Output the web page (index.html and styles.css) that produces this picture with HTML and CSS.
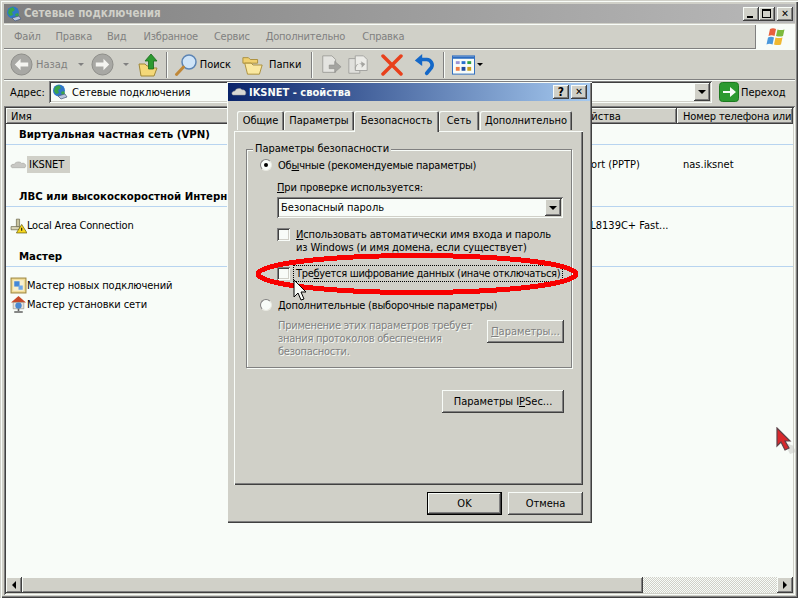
FILE: index.html
```html
<!DOCTYPE html>
<html lang="ru">
<head>
<meta charset="utf-8">
<title>Сетевые подключения</title>
<link rel="stylesheet" href="styles.css">
</head>
<body>
<div class="window">
  <header class="titlebar">
    <svg class="ico16" viewBox="0 0 16 16"><circle cx="7" cy="6.5" r="6" fill="#2f78c8"/><path d="M3 3l4-2 2 3-3 2 1 3-3 1-2-3z" fill="#3aa54a"/><path d="M9 8l3-1 1 3-3 1z" fill="#3aa54a"/><path d="M6 12l7-2 2 3-6 2z" fill="#b8c4dc" stroke="#46587a" stroke-width=".7"/></svg>
    <span class="titlebar-text">Сетевые подключения</span>
    <div class="caption-btns">
      <span class="cap-btn"><i class="cap-min"></i></span>
      <span class="cap-btn"><i class="cap-max"></i></span>
      <span class="cap-btn cap-gap cap-x">✕</span>
    </div>
  </header>

  <nav class="menubar">
    <span class="menu-item m1">Файл</span>
    <span class="menu-item m2">Правка</span>
    <span class="menu-item m3">Вид</span>
    <span class="menu-item m4">Избранное</span>
    <span class="menu-item m5">Сервис</span>
    <span class="menu-item m6">Дополнительно</span>
    <span class="menu-item">Справка</span>
    <div class="logo">
      <svg width="22" height="20" viewBox="0 0 22 20"><path d="M5 2q3-1.500 6 0l-1.500 7q-3-1.500-6 0z" fill="#e8603c"/><path d="M12.500 2.500q3 1 7 0L18 9q-3 1-7 0z" fill="#7cba3c"/><path d="M3 10.500q3-1.500 6 0L7.500 17.500q-3-1.500-6 0z" fill="#4a98dc"/><path d="M10.500 10.500q3 1 7 0L16 17.500q-3 1-7 0z" fill="#f0b830"/></svg>
    </div>
  </nav>

  <div class="toolbar">
    <svg class="nav-ico" viewBox="0 0 24 24"><circle cx="12" cy="12" r="11" fill="#a8a8a4" stroke="#8c8c88"/><path d="M11 6l-6 6 6 6v-4h8v-4h-8z" fill="#f4f4f0"/></svg>
    <span class="tool-label disabled-text back-label">Назад</span>
    <i class="tool-arrow gray-arrow back-arrow"></i>
    <svg class="nav-ico" viewBox="0 0 24 24"><circle cx="12" cy="12" r="11" fill="#a8a8a4" stroke="#8c8c88"/><path d="M13 6l6 6-6 6v-4H5v-4h8z" fill="#f4f4f0"/></svg>
    <i class="tool-arrow gray-arrow fwd-arrow"></i>
    <svg class="tool-ico up-ico" viewBox="0 0 22 24"><path d="M1 11h6l2 2 5 0-2 2h7l-3 8H3z" fill="#f4d878" stroke="#a08838"/><path d="M13 1l6 7h-3.500v8h-5V8H7z" fill="#2c9a30" stroke="#186a1c" stroke-width=".8"/></svg>
    <i class="tool-sep sep1"></i>
    <svg class="tool-ico search-ico" viewBox="0 0 24 24"><circle cx="15" cy="9" r="7" fill="#cfe4f8" stroke="#5c84b4" stroke-width="1.500"/><path d="M9.500 14L2.500 21.500" stroke="#c08838" stroke-width="3" stroke-linecap="round"/></svg>
    <span class="tool-label search-label">Поиск</span>
    <svg class="tool-ico folders-ico" viewBox="0 0 24 24"><path d="M1 4h6l2 2h8v4H1z" fill="#f0d070" stroke="#a88c38"/><path d="M3 10h7l2 2h10l-3 10H6z" fill="#fae8a0" stroke="#a88c38"/></svg>
    <span class="tool-label folders-label">Папки</span>
    <i class="tool-sep sep2"></i>
    <svg class="tool-ico move-ico" viewBox="0 0 24 24"><path d="M3 2h10l4 4v14H3z" fill="#e4e4e0" stroke="#9c9c98"/><path d="M10 12h6V8l7 6-7 6v-4h-6z" fill="#a4a4a0" stroke="#8c8c88" stroke-width=".6"/></svg>
    <svg class="tool-ico copy-ico" viewBox="0 0 24 24"><path d="M2 5h9l3 3v13H2z" fill="#e0e0dc" stroke="#a0a09c"/><path d="M9 2h9l4 4v12H9z" fill="#ececE8" stroke="#a0a09c"/><path d="M10 18a6 6 0 0 1 6-8l-1-2 5 3-4 4v-3a4 4 0 0 0-6 6z" fill="#a4a4a0"/></svg>
    <svg class="tool-ico del-ico" viewBox="0 0 22 22"><path d="M2 2l18 18M20 2L2 20" stroke="#e8401c" stroke-width="3.500" stroke-linecap="round"/></svg>
    <svg class="tool-ico undo-ico" viewBox="0 0 24 24"><path d="M7 6h8a6 6 0 0 1 5 9l-5 6" fill="none" stroke="#1468c8" stroke-width="4" stroke-linecap="round"/><path d="M10 0L2 7l8 6z" fill="#1468c8"/></svg>
    <i class="tool-sep sep3"></i>
    <svg class="views-ico" viewBox="0 0 24 20"><rect x=".5" y=".5" width="23" height="19" fill="#f8fcf8" stroke="#2c6cc0"/><rect x="1" y="1" width="22" height="2.500" fill="#2c6cc0"/><path d="M4 6h4v3H4z" fill="#9c94d4"/><path d="M10 6h4v3h-4z" fill="#2870d0"/><path d="M16 6h4v3h-4z" fill="#2ca048"/><path d="M4 12h4v4H4z" fill="#f07840"/><path d="M10 12h4v4h-4z" fill="#204ca0"/><path d="M16 12h4v4h-4z" fill="#c8a020"/></svg>
    <i class="tool-arrow views-arrow"></i>
  </div>

  <div class="addressbar">
    <span class="addr-label">Адрес:</span>
    <div class="addr-field">
      <svg class="ico16" viewBox="0 0 16 16"><circle cx="7" cy="6.500" r="6" fill="#2f78c8"/><path d="M3 3l4-2 2 3-3 2 1 3-3 1-2-3z" fill="#3aa54a"/><path d="M9 8l3-1 1 3-3 1z" fill="#3aa54a"/><path d="M6 12l7-2 2 3-6 2z" fill="#b8c4dc" stroke="#46587a" stroke-width=".7"/></svg>
      <span class="addr-text">Сетевые подключения</span>
      <span class="drop-btn"><i class="tool-arrow black-arrow"></i></span>
    </div>
    <svg class="go-ico" viewBox="0 0 20 20"><rect x=".5" y=".5" width="19" height="19" rx="3" fill="#2c9a30" stroke="#1c7a20"/><path d="M4 9h7V5l6 5-6 5v-4H4z" fill="#f8fcf8"/></svg>
    <span class="go-label">Переход</span>
  </div>

  <main class="listview">
    <div class="list-header">
      <span class="col-head col-name">Имя</span>
      <span class="col-head col-device">Имя устройства</span>
      <span class="col-head col-phone phone-head">Номер телефона или а</span>
    </div>
    <div class="list-body">
      <h2 class="group group-first">Виртуальная частная сеть (VPN)</h2>
      <div class="row row-vpn">
        <div class="col-name cell">
          <svg class="ico-row" viewBox="0 0 16 16"><path d="M2 11c-2-1-1-4 2-3 1-3 6-3 7-1 3-1 5 2 3 4z" fill="#c8c8c4" stroke="#9c9c98" stroke-width=".5"/></svg>
          <span class="selected">IKSNET</span>
        </div>
        <span class="col-device device-text">WAN Miniport (PPTP)</span>
        <span class="col-phone phone-text">nas.iksnet</span>
      </div>
      <h2 class="group">ЛВС или высокоскоростной Интернет</h2>
      <div class="row row-lan">
        <div class="col-name cell">
          <svg class="ico-row" viewBox="0 0 16 16"><path d="M1 9h8v3H1z" fill="#d8d4b8" stroke="#706c50" stroke-width=".7"/><path d="M6 2h3v7H6z" fill="#c8c4a0" stroke="#706c50" stroke-width=".7"/><path d="M11 7l5 8H6z" fill="#f8d820" stroke="#686010" stroke-width=".7"/><path d="M10.500 10h1v3h-1z" fill="#111"/></svg>
          <span class="cell-text lan-text">Local Area Connection</span>
        </div>
        <span class="col-device device-text">Realtek RTL8139C+ Fast...</span>
      </div>
      <h2 class="group group-wizard">Мастер</h2>
      <div class="row row-wiz1">
        <div class="col-name cell">
          <svg class="ico-row" viewBox="0 0 16 16"><rect x="1" y="1" width="14" height="14" fill="#f0dc98" stroke="#a08840"/><rect x="3" y="3" width="10" height="10" fill="#f8f0d0"/><path d="M4 4h5v5H4z" fill="#4488d8"/><path d="M8 8h4v4H8z" fill="#70a8e8"/></svg>
          <span class="cell-text">Мастер новых подключений</span>
        </div>
      </div>
      <div class="row row-wiz2">
        <div class="col-name cell">
          <svg class="ico-row" viewBox="0 0 16 16"><path d="M8 0L1 6h14z" fill="#c84828"/><path d="M3 6h10v6H3z" fill="#e8e4dc" stroke="#807c74" stroke-width=".5"/><circle cx="8" cy="9" r="3" fill="#4a88d0"/><path d="M8 12v2M4 15h8" stroke="#606060" stroke-width="1.500"/></svg>
          <span class="cell-text">Мастер установки сети</span>
        </div>
      </div>
    </div>
    <div class="hscroll">
      <span class="scroll-btn"><i class="arrow-left"></i></span>
      <span class="scroll-thumb"></span>
      <span class="scroll-track"></span>
      <span class="scroll-btn"><i class="arrow-right"></i></span>
    </div>
  </main>
</div>

<section class="dialog">
  <header class="dlg-title">
    <svg class="dlg-cloud" viewBox="0 0 16 12"><path d="M2 9C0 8 1 5 4 5c1-3 6-3 7-1 3-1 5 3 3 5z" fill="#d8d8d4" stroke="#a0a09c" stroke-width=".5"/></svg>
    <span class="dlg-title-text">IKSNET - свойства</span>
    <span class="cap-btn dlg-help">?</span>
    <span class="cap-btn cap-gap cap-x">✕</span>
  </header>
  <div class="tabs">
    <span class="tab t-general">Общие</span>
    <span class="tab t-params">Параметры</span>
    <span class="tab tab-active t-sec">Безопасность</span>
    <span class="tab t-net">Сеть</span>
    <span class="tab t-more">Дополнительно</span>
  </div>
  <div class="panel">
    <div class="groupbox">
      <span class="legend">Параметры безопасности</span>
      <label class="opt opt-top"><i class="radio radio-on"></i><span>Об<u>ы</u>чные (рекомендуемые параметры)</span></label>
      <div class="sub-label"><u>П</u>ри проверке используется:</div>
      <div class="combo"><span class="combo-text">Безопасный пароль</span><span class="drop-btn combo-btn"><i class="tool-arrow black-arrow"></i></span></div>
      <label class="check-row check-auto"><i class="checkbox"></i><span><u>И</u>спользовать автоматически имя входа и пароль<br>из Windows (и имя домена, если существует)</span></label>
      <label class="check-row check-enc"><i class="checkbox"></i><span class="focus-text">Тре<u>б</u>уется шифрование данных (иначе отключаться)</span></label>
      <label class="opt opt-adv"><i class="radio"></i><span><u>Д</u>ополнительные (выборочные параметры)</span></label>
      <div class="adv-row">
        <p class="adv-note">Применение этих параметров требует<br>знания протоколов обеспечения<br>безопасности.</p>
        <span class="btn btn-params"><u>П</u>араметры...</span>
      </div>
    </div>
    <div class="ipsec-row"><span class="btn btn-ipsec">Параметры I<u>P</u>Sec...</span></div>
  </div>
  <footer class="dlg-footer">
    <span class="btn btn-default">OK</span>
    <span class="btn btn-cancel">Отмена</span>
  </footer>
</section>

<svg class="ellipse" viewBox="0 0 330 48" shape-rendering="crispEdges"><ellipse cx="165" cy="24" rx="159" ry="18.500" fill="none" stroke="#f80000" stroke-width="5"/></svg>
<svg class="cursor-white" viewBox="0 0 14 22"><path d="M1 1v17l4-4 3 7 3-1-3-7h5z" fill="#f8fcf8" stroke="#000"/></svg>
<svg class="cursor-red" viewBox="0 0 20 28"><path d="M4 14l7 7 3 6 6-2-3-6h1z" fill="#c4c4c0" opacity=".5"/><path d="M1 1v18l4-4 4 8 4-2-4-7h5z" fill="#d8282c" stroke="#5c4048" stroke-width="1.200"/></svg>
</body>
</html>
```
FILE: styles.css
```css
* { box-sizing: border-box; }
html, body { margin: 0; padding: 0; }
body {
  width: 798px; height: 598px; overflow: hidden; position: relative;
  background: #d0d0c8; color: #000;
  font: 11px/13px "DejaVu Sans Condensed", "DejaVu Sans", sans-serif;
}
u { text-decoration: underline; }
i { display: block; font-style: normal; }
svg { display: block; flex: none; }

.window {
  height: 598px; padding: 4px 3px 3px 4px; display: flex; flex-direction: column;
  box-shadow: inset 1px 1px #d0d0c8, inset 2px 2px #f8fcf8, inset -1px -1px #404040, inset -2px -2px #808080;
}
.titlebar {
  height: 19px; flex: none; display: flex; align-items: center; padding: 0 2px 0 2px;
  background: linear-gradient(90deg, #808080, #b8b8b8);
}
.titlebar-text { margin-left: 2px; color: #d0d0c8; font-weight: 700; font-size: 11.5px; white-space: nowrap; }
.ico16 { width: 16px; height: 16px; }
.caption-btns { margin-left: auto; display: flex; }
.cap-btn {
  width: 16px; height: 14px; display: flex; align-items: center; justify-content: center;
  background: #d0d0c8; color: #000; font-weight: 700; font-size: 11px; line-height: 12px;
  box-shadow: inset -1px -1px #404040, inset 1px 1px #f8fcf8, inset -2px -2px #808080;
}
.cap-gap { margin-left: 2px; }
.cap-min { width: 6px; height: 2px; background: #000; margin-top: 6px; margin-right: 2px; }
.cap-max { width: 9px; height: 9px; border: 1px solid #000; border-top-width: 2px; margin-right: 1px; }
.cap-x { font-size: 10px; }

.menubar {
  height: 25px; flex: none; display: flex; align-items: center; padding-left: 10px; margin-top: 1px;
  color: #808080; font-size: 11px; letter-spacing: -.2px;
  box-shadow: inset 0 1px #f8fcf8, inset 0 -1px #808080;
}
.menu-item { white-space: nowrap; }
.m1 { margin-right: 15px; }
.m2 { margin-right: 15px; }
.m3 { margin-right: 17px; }
.m4 { margin-right: 16px; }
.m5 { margin-right: 16px; }
.m6 { margin-right: 17px; }
.logo {
  margin-left: auto; width: 40px; height: 24px; background: #f8fcf8;
  display: flex; align-items: center; justify-content: center;
  border-left: 1px solid #808080;
}

.toolbar {
  height: 31px; flex: none; display: flex; align-items: center; padding-left: 6px;
  box-shadow: inset 0 1px #f8fcf8, inset 0 -1px #808080;
}
.nav-ico { width: 23px; height: 23px; }
.tool-label { white-space: nowrap; }
.disabled-text { color: #808080; }
.back-label { margin-left: 3px; }
.tool-arrow { width: 0; height: 0; border: 3px solid transparent; border-top: 3px solid #000; border-bottom: 0; margin-left: 3px; }
.gray-arrow { border-top-color: #808080; }
.back-arrow { margin-left: 10px; margin-right: 7px; }
.fwd-arrow { margin-left: 9px; }
.tool-ico { width: 22px; height: 22px; }
.up-ico { margin-left: 9px; height: 24px; }
.tool-sep { width: 2px; height: 26px; background: #808080; border-right: 1px solid #f8fcf8; }
.sep1 { margin-left: 6px; margin-right: 6px; }
.search-ico { width: 24px; height: 24px; }
.search-label { margin-left: 2px; }
.folders-ico { margin-left: 11px; }
.folders-label { margin-left: 5px; }
.sep2 { margin-left: 10px; margin-right: 7px; }
.copy-ico { margin-left: 5px; }
.del-ico { margin-left: 12px; }
.undo-ico { margin-left: 10px; }
.sep3 { margin-left: 8px; margin-right: 7px; }
.views-ico { width: 23px; height: 20px; }
.views-arrow { margin-left: 2px; }

.addressbar {
  height: 26px; flex: none; display: flex; align-items: center; padding: 0 0 2px 6px;
  box-shadow: inset 0 1px #f8fcf8;
}
.addr-label { width: 39px; }
.addr-field {
  width: 663px; height: 22px; background: #f8fcf8; display: flex; align-items: center; padding: 2px 2px 2px 3px;
  box-shadow: inset 1px 1px #808080, inset -1px -1px #f8fcf8, inset 2px 2px #404040, inset -2px -2px #d0d0c8;
}
.addr-text { margin-left: 4px; white-space: nowrap; }
.drop-btn {
  margin-left: auto; width: 16px; height: 18px; background: #d0d0c8; display: flex; align-items: center; justify-content: center;
  box-shadow: inset -1px -1px #404040, inset 1px 1px #f8fcf8, inset -2px -2px #808080;
}
.black-arrow { margin-left: 0; border-width: 4px; border-bottom: 0; border-top-color: #000; }
.go-ico { width: 20px; height: 20px; margin-left: 7px; }
.go-label { margin-left: 2px; }

.listview {
  flex: 1; min-height: 0; padding: 2px; display: flex; flex-direction: column; background: #f8fcf8;
  box-shadow: inset 1px 1px #808080, inset -1px -1px #f8fcf8, inset 2px 2px #404040, inset -2px -2px #d0d0c8;
}
.list-header { display: flex; height: 16px; flex: none; background: #d0d0c8; }
.col-name { width: 527px; flex: none; }
.col-device { width: 144px; flex: none; white-space: nowrap; }
.col-phone { flex: 1; white-space: nowrap; overflow: hidden; }
.col-head {
  padding: 2px 0 0 5px;
  box-shadow: inset -1px -1px #404040, inset 1px 1px #f8fcf8, inset -2px -2px #808080;
}
.phone-head { padding-left: 6px; letter-spacing: -.1px; }
.list-body { flex: 1; min-height: 0; padding-top: 1px; }
.group {
  height: 20px; padding: 3px 0 0 13px; font-size: 11.3px; line-height: 13px; font-weight: 700;
  border-bottom: 1px solid #b8d4f0; white-space: nowrap; overflow: hidden;
  margin: 13px 0 0;
}
.group-first { margin-top: 0; }
.group-wizard { margin-top: 12px; }
.row { display: flex; align-items: center; height: 19px; }
.row-vpn { margin-top: 10px; }
.row-lan { margin-top: 9px; }
.row-wiz1 { margin-top: 9px; }
.cell { display: flex; align-items: center; padding-left: 4px; }
.ico-row { width: 17px; height: 17px; }
.selected { background: #d0d0c8; padding: 2px 0 2px 2px; width: 43px; }
.cell-text { white-space: nowrap; letter-spacing: -.1px; }
.lan-text { letter-spacing: -.2px; }
.device-text { padding-left: 5px; }
.phone-text { padding-left: 6px; }

.hscroll { height: 16px; flex: none; display: flex; }
.scroll-btn {
  width: 16px; height: 16px; flex: none; background: #d0d0c8; display: flex; align-items: center; justify-content: center;
  box-shadow: inset -1px -1px #404040, inset 1px 1px #f8fcf8, inset -2px -2px #808080;
}
.arrow-left { border: 4px solid transparent; border-right: 4px solid #000; border-left: 0; }
.arrow-right { border: 4px solid transparent; border-left: 4px solid #000; border-right: 0; }
.scroll-thumb {
  width: 621px; flex: none; background: #d0d0c8;
  box-shadow: inset -1px -1px #404040, inset 1px 1px #f8fcf8, inset -2px -2px #808080;
}
.scroll-track { flex: 1; background: repeating-conic-gradient(#d0d0c8 0 25%, #f8fcf8 0 50%) 0 0 / 2px 2px; }

.dialog {
  position: absolute; left: 227px; top: 82px; width: 365px; height: 441px;
  background: #d0d0c8; padding: 1px 2px 2px 1px; display: flex; flex-direction: column;
  box-shadow: inset 1px 1px #f8fcf8, inset -1px -1px #404040, inset -2px -2px #808080;
}
.dlg-title {
  height: 18px; flex: none; display: flex; align-items: center; padding: 0 3px 0 3px;
  background: linear-gradient(90deg, #0a246a, #a6caf0); color: #f8fcf8; font-weight: 700; font-size: 11px;
}
.dlg-cloud { width: 16px; height: 12px; }
.dlg-title-text { margin-left: 2px; white-space: nowrap; }
.dlg-help { margin-left: auto; font-size: 12px; }

.tabs { display: flex; align-items: flex-end; height: 30px; flex: none; padding-left: 9px; position: relative; z-index: 1; }
.tab {
  height: 19px; padding-top: 3px; text-align: center; background: #d0d0c8; white-space: nowrap; margin-bottom: 1px;
  border-radius: 2px 2px 0 0;
  box-shadow: inset 1px 1px #f8fcf8, inset -1px 0 #404040, inset -2px 0 #808080;
}
.t-general { width: 47px; }
.t-params { width: 70px; }
.t-sec { width: 85px; }
.t-net { width: 40px; }
.t-more { width: 92px; margin-left: 1px; }
.tab-active { height: 21px; padding-top: 3px; margin-bottom: -1px; position: relative; }

.panel {
  margin-left: 6px; width: 349px; height: 354px; flex: none; padding: 18px 11px 0 12px;
  box-shadow: inset 1px 1px #f8fcf8, inset -1px -1px #404040, inset -2px -2px #808080;
}
.groupbox {
  position: relative; height: 219px; padding: 8px 0 0 13px;
  border: 1px solid #808080; box-shadow: inset 1px 1px #f8fcf8, 1px 1px #f8fcf8;
}
.legend { position: absolute; left: 6px; top: -8px; background: #d0d0c8; padding: 0 2px; white-space: nowrap; }
.opt { display: flex; align-items: center; height: 14px; letter-spacing: -.2px; }
.opt span { margin-left: 6px; white-space: nowrap; }
.radio {
  width: 12px; height: 12px; flex: none; border-radius: 50%; background: #f8fcf8; display: flex; align-items: center; justify-content: center;
  border: 1px solid #808080; border-right-color: #e8e8e0; border-bottom-color: #e8e8e0;
}
.radio-on::after { content: ""; width: 4px; height: 4px; border-radius: 50%; background: #000; }
.sub-label { margin: 9px 0 0 17px; height: 13px; white-space: nowrap; letter-spacing: -.15px; }
.combo {
  margin: 3px 0 0 17px; width: 286px; height: 21px; background: #f8fcf8; display: flex; align-items: center; padding: 2px;
  box-shadow: inset 1px 1px #808080, inset -1px -1px #f8fcf8, inset 2px 2px #404040, inset -2px -2px #d0d0c8;
}
.combo-text { margin-left: 2px; white-space: nowrap; }
.combo-btn { height: 17px; }
.check-row { display: flex; margin-left: 17px; white-space: nowrap; }
.check-auto { margin-top: 10px; height: 27px; letter-spacing: -.14px; }
.checkbox {
  width: 13px; height: 13px; flex: none; background: #f8fcf8;
  box-shadow: inset 1px 1px #808080, inset -1px -1px #f8fcf8, inset 2px 2px #404040, inset -2px -2px #d0d0c8;
}
.check-row span { margin-left: 6px; display: block; }
.check-enc { margin-top: 10px; align-items: center; height: 16px; letter-spacing: -.31px; }
.check-enc .focus-text { margin-left: 4px; outline: 1px dotted #000; padding: 1px 2px; width: 268px; flex: none; }
.opt-adv { margin-top: 17px; }
.adv-row { display: flex; margin: 8px 0 0 18px; }
.adv-note { margin: -1px 0 0; width: 209px; color: #808080; text-shadow: 1px 1px #f8fcf8; white-space: nowrap; letter-spacing: -.25px; }
.btn {
  display: flex; align-items: center; justify-content: center; background: #d0d0c8; white-space: nowrap;
  box-shadow: inset -1px -1px #404040, inset 1px 1px #f8fcf8, inset -2px -2px #808080;
}
.btn-params { width: 77px; height: 23px; color: #808080; text-shadow: 1px 1px #f8fcf8; }
.ipsec-row { display: flex; justify-content: flex-end; margin: 22px 8px 0 0; }
.btn-ipsec { width: 122px; height: 23px; }
.dlg-footer { display: flex; justify-content: flex-end; gap: 6px; padding: 7px 7px 0 0; }
.btn-default { width: 75px; height: 23px; outline: 1px solid #000; outline-offset: -1px; box-shadow: inset -2px -2px #404040, inset 2px 2px #f8fcf8, inset -3px -3px #808080; }
.btn-cancel { width: 75px; height: 23px; }

.ellipse { position: absolute; left: 252px; top: 250px; width: 330px; height: 48px; }
.cursor-white { position: absolute; left: 293px; top: 279px; width: 14px; height: 22px; }
.cursor-red { position: absolute; left: 776px; top: 427px; width: 20px; height: 28px; }
```
